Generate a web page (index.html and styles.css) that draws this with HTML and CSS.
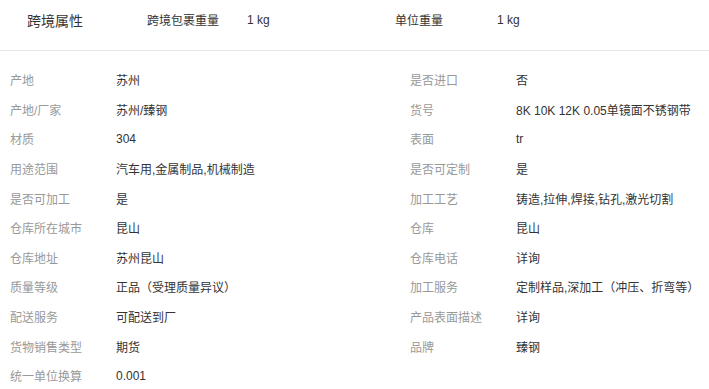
FILE: index.html
```html
<!DOCTYPE html>
<html lang="zh-CN">
<head>
    <meta charset="UTF-8">
    <title>跨境属性</title>
    <link rel="stylesheet" href="styles.css">
</head>
<body>
    <div class="attr-head">
        <div class="attr-title">跨境属性</div>
        <div class="head-label">跨境包裹重量</div>
        <div class="head-value">1 kg</div>
        <div class="head-label narrow">单位重量</div>
        <div class="head-value">1 kg</div>
    </div>

    <div class="attr-list">
        <div class="attr-item"><span class="attr-label">产地</span><span class="attr-value">苏州</span></div>
        <div class="attr-item"><span class="attr-label">是否进口</span><span class="attr-value">否</span></div>
        <div class="attr-item"><span class="attr-label">产地/厂家</span><span class="attr-value">苏州/臻钢</span></div>
        <div class="attr-item"><span class="attr-label">货号</span><span class="attr-value">8K 10K 12K 0.05单镜面不锈钢带</span></div>
        <div class="attr-item"><span class="attr-label">材质</span><span class="attr-value">304</span></div>
        <div class="attr-item"><span class="attr-label">表面</span><span class="attr-value">tr</span></div>
        <div class="attr-item"><span class="attr-label">用途范围</span><span class="attr-value">汽车用,金属制品,机械制造</span></div>
        <div class="attr-item"><span class="attr-label">是否可定制</span><span class="attr-value">是</span></div>
        <div class="attr-item"><span class="attr-label">是否可加工</span><span class="attr-value">是</span></div>
        <div class="attr-item"><span class="attr-label">加工工艺</span><span class="attr-value">铸造,拉伸,焊接,钻孔,激光切割</span></div>
        <div class="attr-item"><span class="attr-label">仓库所在城市</span><span class="attr-value">昆山</span></div>
        <div class="attr-item"><span class="attr-label">仓库</span><span class="attr-value">昆山</span></div>
        <div class="attr-item"><span class="attr-label">仓库地址</span><span class="attr-value">苏州昆山</span></div>
        <div class="attr-item"><span class="attr-label">仓库电话</span><span class="attr-value">详询</span></div>
        <div class="attr-item"><span class="attr-label">质量等级</span><span class="attr-value">正品（受理质量异议）</span></div>
        <div class="attr-item"><span class="attr-label">加工服务</span><span class="attr-value">定制样品,深加工（冲压、折弯等）</span></div>
        <div class="attr-item"><span class="attr-label">配送服务</span><span class="attr-value">可配送到厂</span></div>
        <div class="attr-item"><span class="attr-label">产品表面描述</span><span class="attr-value">详询</span></div>
        <div class="attr-item"><span class="attr-label">货物销售类型</span><span class="attr-value">期货</span></div>
        <div class="attr-item"><span class="attr-label">品牌</span><span class="attr-value">臻钢</span></div>
        <div class="attr-item"><span class="attr-label">统一单位换算</span><span class="attr-value">0.001</span></div>
    </div>
</body>
</html>
```

FILE: styles.css
```css
* {
    margin: 0;
    padding: 0;
    box-sizing: border-box;
}

body {
    font-family: "Liberation Sans", "Noto Sans CJK SC", sans-serif;
    font-size: 12px;
    color: #333;
    background: #fff;
}

.attr-head {
    display: flex;
    align-items: center;
    height: 51px;
    padding: 0 0 11px 27px;
    border-bottom: 1px solid #e6e6e6;
}

.attr-title {
    width: 120px;
    font-size: 14px;
    color: #333;
}

.head-label {
    width: 100px;
    color: #333;
}

.head-label.narrow {
    width: 102px;
}

.head-value {
    width: 148px;
}

.attr-list {
    display: grid;
    grid-template-columns: 400px 1fr;
    padding: 14px 0 0 10px;
}

.attr-item {
    display: flex;
    align-items: center;
    height: 29.6px;
}

.attr-label {
    width: 106px;
    flex-shrink: 0;
    color: #999;
}

.attr-value {
    color: #333;
    white-space: nowrap;
}
```
